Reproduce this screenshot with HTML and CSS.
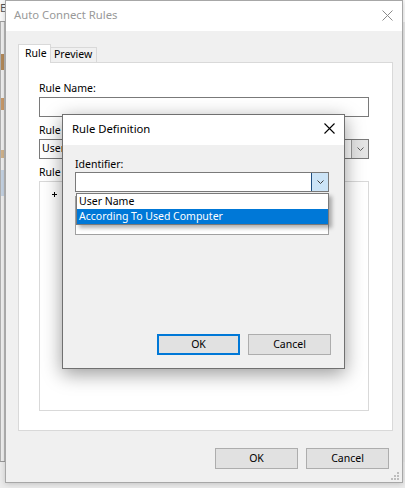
FILE: index.html
```html
<!DOCTYPE html>
<html>
<head>
<meta charset="utf-8">
<title>Auto Connect Rules</title>
<link rel="stylesheet" href="styles.css">
</head>
<body>
<div class="desktop">
  <div class="bg-left">
    <div class="bg-left-top"><span class="bg-letter">E</span></div>
    <div class="bg-left-body">
      <span class="bg-chip chip-a"></span>
      <span class="bg-chip chip-b"></span>
      <span class="bg-chip chip-c"></span>
      <span class="bg-chip chip-d"></span>
    </div>
  </div>

  <div class="window">
    <div class="titlebar">
      <span class="title inactive">Auto Connect Rules</span>
      <svg class="close-x" width="11" height="11" viewBox="0 0 11 11"><path d="M0.5 0.5 L10.5 10.5 M10.5 0.5 L0.5 10.5" stroke="#8a8a8a" stroke-width="1" fill="none"/></svg>
    </div>
    <div class="client">
      <div class="tabs">
        <div class="tab tab-active">Rule</div>
        <div class="tab tab-idle">Preview</div>
      </div>
      <div class="panel">
        <div class="label">Rule Name:</div>
        <div class="textbox"></div>
        <div class="label gap clip">Rule Type:</div>
        <div class="combo main-combo">
          <span class="combo-text clip-text">User Name</span>
          <span class="combo-btn main-btn">
            <svg width="7" height="4" viewBox="0 0 7 4"><path d="M0.5 0.5 L3.5 3.5 L6.5 0.5" stroke="#606060" stroke-width="1" fill="none"/></svg>
          </span>
        </div>
        <div class="label gap clip">Rule Definitions:</div>
        <div class="tree">
          <svg class="plus" width="5" height="5" viewBox="0 0 5 5"><rect x="2" y="0" width="1" height="5" fill="#000"/><rect x="0" y="2" width="5" height="1" fill="#000"/></svg>
        </div>
      </div>
      <div class="btn-row">
        <div class="btn">OK</div>
        <div class="btn">Cancel</div>
      </div>
    </div>
    <svg class="grip" width="9" height="9" viewBox="0 0 9 9">
      <rect x="6" y="0" width="2" height="2" fill="#bdbdbd"/>
      <rect x="3" y="3" width="2" height="2" fill="#bdbdbd"/>
      <rect x="6" y="3" width="2" height="2" fill="#bdbdbd"/>
      <rect x="0" y="6" width="2" height="2" fill="#bdbdbd"/>
      <rect x="3" y="6" width="2" height="2" fill="#bdbdbd"/>
      <rect x="6" y="6" width="2" height="2" fill="#bdbdbd"/>
    </svg>
  </div>

  <div class="bg-right"></div>
</div>

<div class="dialog">
  <div class="titlebar dlg-titlebar">
    <span class="title">Rule Definition</span>
    <svg class="close-x dlg-x" width="11" height="11" viewBox="0 0 11 11"><path d="M0.5 0.5 L10.5 10.5 M10.5 0.5 L0.5 10.5" stroke="#000" stroke-width="1.1" fill="none"/></svg>
  </div>
  <div class="dlg-client">
    <div class="label">Identifier:</div>
    <div class="combo dlg-combo">
      <span class="combo-text"></span>
      <span class="combo-btn dlg-btn">
        <svg width="7" height="4" viewBox="0 0 7 4"><path d="M0.5 0.5 L3.5 3.5 L6.5 0.5" stroke="#404040" stroke-width="1" fill="none"/></svg>
      </span>
    </div>
    <div class="listbox"></div>
    <div class="btn-row dlg-btns">
      <div class="btn btn-default">OK</div>
      <div class="btn">Cancel</div>
    </div>
  </div>
</div>

<div class="droplist">
  <div class="drop-item">User Name</div>
  <div class="drop-item selected">According To Used Computer</div>
</div>
</body>
</html>
```

FILE: styles.css
```css
* {
  box-sizing: border-box;
}

html,
body {
  margin: 0;
  padding: 0;
}

body {
  width: 405px;
  height: 488px;
  overflow: hidden;
  position: relative;
  background: #ececec;
  font-family: "Noto Sans", "Segoe UI", sans-serif;
  font-size: 10.5px;
  color: #000;
}

.desktop {
  display: flex;
  align-items: flex-start;
  height: 488px;
}

/* background window fragment on the left */
.bg-left {
  width: 5px;
  height: 462px;
  display: flex;
  flex-direction: column;
  overflow: hidden;
  border-bottom: 1px solid #9a9a9a;
}

.bg-left-top {
  height: 22px;
  background: #fafafa;
  border-bottom: 1px solid #a0a0a0;
  overflow: hidden;
}

.bg-letter {
  display: block;
  font-size: 11px;
  line-height: 16px;
  color: #555;
}

.bg-left-body {
  flex: 1;
  background: #f0f0f0;
  border-left: 1px solid #b0b0b0;
  border-right: 1px solid #b8b8b8;
  display: flex;
  flex-direction: column;
}

.bg-chip {
  display: block;
  width: 3px;
  background: #b48a5a;
}

.chip-a {
  height: 16px;
  margin-top: 32px;
}

.chip-b {
  height: 12px;
  margin-top: 28px;
  background: #c99a6a;
}

.chip-c {
  height: 8px;
  margin-top: 40px;
  background: #d2b48c;
}

.chip-d {
  height: 26px;
  margin-top: 12px;
  background: #c5d3e3;
}

.bg-right {
  width: 2px;
  height: 462px;
  background: #e8e8e8;
  border-top: 22px solid #fafafa;
}

/* main window */
.window {
  width: 398px;
  height: 483px;
  border: 1px solid #a7a7a7;
  background: #f0f0f0;
  display: flex;
  flex-direction: column;
  position: relative;
  box-shadow: 0 1px 6px rgba(0, 0, 0, 0.18);
}

.titlebar {
  height: 30px;
  flex: none;
  background: #fff;
  display: flex;
  align-items: flex-start;
  justify-content: space-between;
  padding-left: 8px;
  line-height: 28px;
}

.title {
  font-size: 11.3px;
  white-space: nowrap;
}

.title.inactive {
  color: #999;
}

.close-x {
  margin-top: 9px;
  margin-right: 9px;
}

.client {
  flex: 1;
  display: flex;
  flex-direction: column;
  padding: 13px 13px 13px 12px;
}

.tabs {
  display: flex;
  align-items: flex-end;
  height: 18px;
}

.tab {
  border: 1px solid #d9d9d9;
  border-bottom: none;
  white-space: nowrap;
}

.tab-active {
  position: relative;
  z-index: 1;
  width: 33px;
  height: 19px;
  margin-bottom: -1px;
  background: #fff;
  padding: 1px 0 2px 6px;
  line-height: 15px;
}

.tab-idle {
  width: 46px;
  height: 15px;
  border-left: none;
  background: #f0f0f0;
  padding: 0 0 1px 3px;
  line-height: 13px;
}

.panel {
  width: 375px;
  height: 369px;
  flex: none;
  background: #fff;
  border: 1px solid #d9d9d9;
  padding: 18px 0 0 20px;
  display: flex;
  flex-direction: column;
}

.label {
  height: 15px;
  line-height: 15px;
  white-space: nowrap;
}

.label.gap {
  margin-top: 6px;
}

.label.clip {
  width: 23px;
  overflow: hidden;
}

.textbox {
  width: 330px;
  height: 20px;
  margin-top: 1px;
  border: 1px solid #7a7a7a;
  background: #fff;
}

.combo {
  height: 20px;
  border: 1px solid #7a7a7a;
  background: #fff;
  display: flex;
  align-items: stretch;
  justify-content: space-between;
}

.main-combo {
  width: 330px;
  margin-top: 1px;
}

.combo-text {
  padding-left: 2px;
  line-height: 17px;
  white-space: nowrap;
}

.combo-text.clip-text {
  width: 22px;
  overflow: hidden;
}

.combo-btn {
  width: 17px;
  display: flex;
  align-items: center;
  justify-content: center;
}

.main-btn {
  background: #e5e5e5;
  border-left: 1px solid #9a9a9a;
}

.tree {
  width: 330px;
  height: 230px;
  margin-top: 1px;
  border: 1px solid #d9d9d9;
  padding: 10px 0 0 12px;
}

.plus {
  display: block;
}

.btn-row {
  display: flex;
  justify-content: flex-end;
  gap: 8px;
  margin-top: 17px;
}

.btn {
  width: 83px;
  height: 21px;
  background: #e1e1e1;
  border: 1px solid #adadad;
  display: flex;
  align-items: center;
  justify-content: center;
  line-height: 15px;
}

.btn-default {
  border: 2px solid #0078d7;
}

.grip {
  position: absolute;
  right: 2px;
  bottom: 1px;
}

/* overlay dialog */
.dialog {
  position: absolute;
  left: 62px;
  top: 114px;
  width: 283px;
  height: 255px;
  border: 1px solid #707070;
  background: #f0f0f0;
  display: flex;
  flex-direction: column;
  box-shadow: 0 5px 18px rgba(0, 0, 0, 0.4);
  z-index: 5;
}

.dlg-titlebar {
  padding-left: 9px;
}

.dlg-x {
  margin-top: 8px;
  margin-right: 9px;
}

.dlg-client {
  flex: 1;
  display: flex;
  flex-direction: column;
  padding: 12px 13px 13px 12px;
}

.dlg-combo {
  width: 254px;
}

.dlg-btn {
  background: #cce4f7;
  border-left: 1px solid #1f4f82;
}

.listbox {
  width: 254px;
  height: 39px;
  margin-top: 4px;
  border: 1px solid #a0a0a0;
  background: #fff;
}

.dlg-btns {
  margin-top: auto;
}

/* open dropdown list */
.droplist {
  position: absolute;
  left: 76px;
  top: 193px;
  width: 253px;
  height: 32px;
  border: 1px solid #7a7a7a;
  background: #fff;
  box-shadow: 3px 3px 4px rgba(0, 0, 0, 0.3);
  z-index: 6;
}

.drop-item {
  height: 15px;
  line-height: 15px;
  padding-left: 2px;
  white-space: nowrap;
}

.drop-item.selected {
  background: #0078d7;
  color: #fff;
}
```
